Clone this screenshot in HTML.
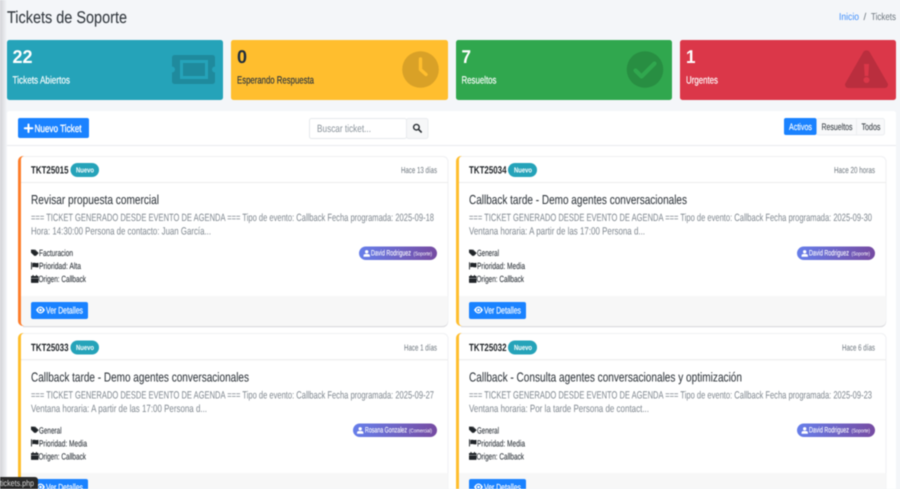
<!DOCTYPE html>
<html lang="es">
<head>
<meta charset="utf-8">
<title>Tickets de Soporte</title>
<style>
html,body{margin:0;padding:0;width:900px;height:489px;overflow:hidden;background:#f4f6f9}
svg{display:block;filter:blur(.42px)}
text{font-family:"Liberation Sans",sans-serif;text-rendering:geometricPrecision}
.m{font-size:9px;fill:#343a40;stroke:#343a40;stroke-width:.12}
.d{font-size:10.5px;fill:#7f878f}
.t{font-size:13px;fill:#343a40;stroke:#343a40;stroke-width:.08}
.k{font-size:10.5px;font-weight:700;fill:#212529}
.b{font-size:7.5px;font-weight:700;fill:#fff}
.h{font-size:8.8px;fill:#6c757d}
.n{font-size:8px;fill:#fff;stroke:#fff;stroke-width:.1}
.r{font-size:5.5px;fill:#fff}
.v{font-size:9.5px;fill:#fff;stroke:#fff;stroke-width:.15}
.sn{font-size:18.5px;font-weight:700;fill:#fff}
.sl{font-size:10.5px;fill:#fff;stroke:#fff;stroke-width:.15}
</style>
</head>
<body>
<svg width="900" height="489" viewBox="0 0 900 489" xmlns="http://www.w3.org/2000/svg">
<defs>
<linearGradient id="pg" x1="0" x2="1" y1="0" y2="0"><stop offset="0" stop-color="#667eea"/><stop offset="1" stop-color="#764ba2"/></linearGradient>
<linearGradient id="sh" x1="0" x2="1" y1="0" y2="0"><stop offset="0" stop-color="#d2d2d6"/><stop offset="1" stop-color="#f4f6f9"/></linearGradient>
<g id="tag"><path d="M0 0.6h3.1l3.5 3.5-3 3L0 3.6z" fill="#212529"/><path d="M4.2 0.6l3.5 3.5-3 3-.7-.7 2.3-2.3-3-3.5z" fill="#212529"/></g>
<path id="flag" d="M0 .3h.9v7.2H0zM1.3 1c2-.9 3.3.6 6.2-.2v4.3c-2.9.8-4.2-.7-6.2.2z" fill="#212529"/>
<path id="cal" d="M1.5 0h1v1h2.5V0h1v1H7a.5.5 0 0 1 .5.5V3H0V1.500A.5.5 0 0 1 .5 1h1zM0 3.400h7.500V7.400a.5.5 0 0 1-.5.5H.5a.5.5 0 0 1-.5-.5z" fill="#212529"/>
<g id="usr"><circle cx="3.200" cy="1.800" r="1.700" fill="#fff"/><path d="M0 6.800V5.600C0 4.500 1 4 2 4h2.400C5.400 4 6.400 4.500 6.400 5.600v1.200z" fill="#fff"/></g>
<g id="eye"><path fill-rule="evenodd" d="M0 3.500C1.400 1.200 2.900 0 4.500 0S7.600 1.200 9 3.500C7.600 5.800 6.100 7 4.500 7S1.400 5.800 0 3.500zM4.500 1.200a2.300 2.300 0 1 0 0 4.600 2.300 2.300 0 0 0 0-4.600z" fill="#fff"/><circle cx="4.500" cy="3.500" r="1.300" fill="#fff"/></g>
</defs>

<rect width="900" height="489" fill="#f4f6f9"/>
<rect width="7" height="489" fill="url(#sh)"/>

<text x="7" y="23" font-size="17" fill="#343a40" stroke="#343a40" stroke-width=".1" textLength="120" lengthAdjust="spacingAndGlyphs">Tickets de Soporte</text>
<text x="839" y="20" font-size="10" fill="#3f8efc" textLength="20" lengthAdjust="spacingAndGlyphs">Inicio</text>
<text x="863.500" y="20" font-size="10" fill="#6c757d">/</text>
<text x="871" y="20" font-size="10" fill="#6c757d" textLength="25" lengthAdjust="spacingAndGlyphs">Tickets</text>

<!-- Stat cards -->
<rect x="7" y="40" width="216" height="60" rx="2.500" fill="#25a3b9"/>
<text class="sn" x="12.500" y="63" textLength="20" lengthAdjust="spacingAndGlyphs">22</text>
<text class="sl" x="12.500" y="83.500" textLength="57.500" lengthAdjust="spacingAndGlyphs">Tickets Abiertos</text>
<path fill-rule="evenodd" fill="#000" fill-opacity=".15" d="M174.500 55h38a2.500 2.500 0 0 1 2.500 2.500v9a3 3 0 0 0 0 6v9a2.500 2.500 0 0 1-2.500 2.500h-38a2.500 2.500 0 0 1-2.500-2.500v-9a3 3 0 0 0 0-6v-9a2.500 2.500 0 0 1 2.500-2.500zM180 60v19h28V60zM183 63h22v13h-22z"/>

<rect x="231" y="40" width="217" height="60" rx="2.500" fill="#ffbe2e"/>
<text class="sn" x="237" y="63" style="fill:#1f2d3d" textLength="10" lengthAdjust="spacingAndGlyphs">0</text>
<text class="sl" x="237" y="83.500" style="fill:#2b3540;stroke:#2b3540" textLength="77" lengthAdjust="spacingAndGlyphs">Esperando Respuesta</text>
<circle cx="420.500" cy="69.500" r="18.300" fill="#000" fill-opacity=".15"/>
<path d="M420.500 59v10.500l5.500 5" fill="none" stroke="#ffbe2e" stroke-width="3.400" stroke-linecap="round" stroke-linejoin="round"/>

<rect x="456" y="40" width="216" height="60" rx="2.500" fill="#30a74e"/>
<text class="sn" x="461.500" y="63" textLength="9.500" lengthAdjust="spacingAndGlyphs">7</text>
<text class="sl" x="461.500" y="83.500" textLength="35" lengthAdjust="spacingAndGlyphs">Resueltos</text>
<circle cx="645" cy="69.500" r="18.300" fill="#000" fill-opacity=".15"/>
<path d="M635.500 70.500l6 6 13-13" fill="none" stroke="#30a74e" stroke-width="4.200" stroke-linecap="round" stroke-linejoin="round"/>

<rect x="680" y="40" width="216" height="60" rx="2.500" fill="#db3749"/>
<text class="sn" x="686" y="63" textLength="9.500" lengthAdjust="spacingAndGlyphs">1</text>
<text class="sl" x="686" y="83.500" textLength="32" lengthAdjust="spacingAndGlyphs">Urgentes</text>
<path d="M863 52.500a4 4 0 0 1 7 0l17.500 30.500a3.300 3.300 0 0 1-3 5h-36a3.300 3.300 0 0 1-3-5z" fill="#000" fill-opacity=".15"/>
<path d="M864 64h5l-.7 12h-3.600z" fill="#db3749"/>
<circle cx="866.500" cy="80" r="3" fill="#db3749"/>

<!-- Main panel -->
<rect x="7" y="111" width="889" height="390" rx="2.500" fill="#fff"/>
<rect x="7" y="145" width="889" height="1" fill="#e9ebee"/>

<rect x="18" y="118" width="71" height="20" rx="2" fill="#1a82ff"/>
<path d="M28.500 124.500v7.500M24.800 128.200h7.500" stroke="#fff" stroke-width="2" stroke-linecap="round"/>
<text x="34.500" y="132" font-size="10.500" fill="#fff" stroke="#fff" stroke-width=".3" textLength="47" lengthAdjust="spacingAndGlyphs">Nuevo Ticket</text>

<rect x="309.500" y="118.500" width="97" height="20" rx="2" fill="#fff" stroke="#e6e9ec"/>
<text x="317" y="132" font-size="10.500" fill="#8a939b" textLength="54" lengthAdjust="spacingAndGlyphs">Buscar ticket...</text>
<rect x="406.500" y="118.500" width="21.500" height="20" rx="2" fill="#f6f7f8" stroke="#e9ebee"/>
<circle cx="416.400" cy="127.200" r="2.800" fill="none" stroke="#2b3035" stroke-width="1.400"/>
<path d="M418.500 129.300l2.700 2.700" stroke="#2b3035" stroke-width="1.600" stroke-linecap="round"/>

<rect x="816.500" y="118.500" width="68" height="16.500" rx="2" fill="#f8f9fa" stroke="#eceef0"/>
<path d="M856.500 118.500v16.500" stroke="#eceef0"/>
<rect x="784" y="118" width="32.500" height="17" rx="2" fill="#1a82ff"/>
<text x="789" y="130" font-size="9.500" fill="#fff" stroke="#fff" stroke-width=".12" textLength="23" lengthAdjust="spacingAndGlyphs">Activos</text>
<text x="821.500" y="130" font-size="9.500" fill="#3e444a" stroke="#3e444a" stroke-width=".1" textLength="31" lengthAdjust="spacingAndGlyphs">Resueltos</text>
<text x="861.500" y="130" font-size="9.500" fill="#3e444a" stroke="#3e444a" stroke-width=".1" textLength="19" lengthAdjust="spacingAndGlyphs">Todos</text>

<!-- Ticket 1 -->
<g>
<rect x="18.500" y="156.500" width="429.500" height="169.500" rx="5" fill="#fff" stroke="#eff0f2"/>
<path d="M20 296h428v25a5 5 0 0 1-5 5H23a5 5 0 0 1-3-1z" fill="#f7f7f7"/>
<path d="M23 326h420a5 5 0 0 0 5-5v1a5 5 0 0 1-5 5.200H23z" fill="#dcdcdf"/>
<path d="M23 156a5 5 0 0 0-5 5v160a5 5 0 0 0 5 5h1a4 4 0 0 1-3-4V160a4 4 0 0 1 3-4z" fill="#fd7e2c"/>
<rect x="21" y="182" width="427" height="1" fill="#ececec"/>
<text class="k" x="31" y="173.500" textLength="37.500" lengthAdjust="spacingAndGlyphs">TKT25015</text>
<rect x="70.500" y="163" width="28.500" height="14" rx="7" fill="#25a3b9"/>
<text class="b" x="76" y="172.700" textLength="18" lengthAdjust="spacingAndGlyphs">Nuevo</text>
<text class="h" x="401" y="173" textLength="36" lengthAdjust="spacingAndGlyphs">Hace 13 días</text>
<text class="t" x="31" y="204" textLength="128" lengthAdjust="spacingAndGlyphs">Revisar propuesta comercial</text>
<text class="d" x="31" y="221" textLength="403" lengthAdjust="spacingAndGlyphs">=== TICKET GENERADO DESDE EVENTO DE AGENDA === Tipo de evento: Callback Fecha programada: 2025-09-18</text>
<text class="d" x="31" y="234.500" textLength="180" lengthAdjust="spacingAndGlyphs">Hora: 14:30:00 Persona de contacto: Juan García...</text>
<use href="#tag" x="31" y="249"/><text class="m" x="39" y="256" textLength="34" lengthAdjust="spacingAndGlyphs">Facturacion</text>
<use href="#flag" x="31" y="262"/><text class="m" x="39" y="269" textLength="42" lengthAdjust="spacingAndGlyphs">Prioridad: Alta</text>
<use href="#cal" x="31" y="275"/><text class="m" x="38.500" y="282" textLength="47.500" lengthAdjust="spacingAndGlyphs">Origen: Callback</text>
<rect x="359" y="246.500" width="78" height="13.500" rx="6.750" fill="url(#pg)"/>
<use href="#usr" x="363.500" y="250"/>
<text class="n" x="371" y="255.500" textLength="40" lengthAdjust="spacingAndGlyphs">David Rodriguez</text>
<text class="r" x="413.500" y="255.500" textLength="18.500" lengthAdjust="spacingAndGlyphs">(Soporte)</text>
<rect x="31" y="302" width="57" height="17" rx="2" fill="#1a82ff"/>
<use href="#eye" x="36" y="306.500"/>
<text class="v" x="46" y="313.500" textLength="37" lengthAdjust="spacingAndGlyphs">Ver Detalles</text>
</g>

<!-- Ticket 2 -->
<g>
<rect x="456.500" y="156.500" width="429.500" height="169.500" rx="5" fill="#fff" stroke="#eff0f2"/>
<path d="M458 296h428v25a5 5 0 0 1-5 5H461a5 5 0 0 1-3-1z" fill="#f7f7f7"/>
<path d="M461 326h420a5 5 0 0 0 5-5v1a5 5 0 0 1-5 5.200H461z" fill="#dcdcdf"/>
<path d="M461 156a5 5 0 0 0-5 5v160a5 5 0 0 0 5 5h1a4 4 0 0 1-3-4V160a4 4 0 0 1 3-4z" fill="#ffbe2e"/>
<rect x="459" y="182" width="427" height="1" fill="#ececec"/>
<text class="k" x="469" y="173.500" textLength="37.500" lengthAdjust="spacingAndGlyphs">TKT25034</text>
<rect x="508" y="163" width="29" height="14" rx="7" fill="#25a3b9"/>
<text class="b" x="514" y="172.700" textLength="18" lengthAdjust="spacingAndGlyphs">Nuevo</text>
<text class="h" x="834" y="173" textLength="41" lengthAdjust="spacingAndGlyphs">Hace 20 horas</text>
<text class="t" x="469" y="204" textLength="218" lengthAdjust="spacingAndGlyphs">Callback tarde - Demo agentes conversacionales</text>
<text class="d" x="469" y="221" textLength="403" lengthAdjust="spacingAndGlyphs">=== TICKET GENERADO DESDE EVENTO DE AGENDA === Tipo de evento: Callback Fecha programada: 2025-09-30</text>
<text class="d" x="469" y="234.500" textLength="176" lengthAdjust="spacingAndGlyphs">Ventana horaria: A partir de las 17:00 Persona d...</text>
<use href="#tag" x="469" y="249"/><text class="m" x="477" y="256" textLength="22" lengthAdjust="spacingAndGlyphs">General</text>
<use href="#flag" x="469" y="262"/><text class="m" x="477" y="269" textLength="48" lengthAdjust="spacingAndGlyphs">Prioridad: Media</text>
<use href="#cal" x="469" y="275"/><text class="m" x="476.500" y="282" textLength="47.500" lengthAdjust="spacingAndGlyphs">Origen: Callback</text>
<rect x="797" y="246.500" width="78" height="13.500" rx="6.750" fill="url(#pg)"/>
<use href="#usr" x="801.500" y="250"/>
<text class="n" x="809" y="255.500" textLength="40" lengthAdjust="spacingAndGlyphs">David Rodriguez</text>
<text class="r" x="851.500" y="255.500" textLength="18.500" lengthAdjust="spacingAndGlyphs">(Soporte)</text>
<rect x="469" y="302" width="57" height="17" rx="2" fill="#1a82ff"/>
<use href="#eye" x="474" y="306.500"/>
<text class="v" x="484" y="313.500" textLength="37" lengthAdjust="spacingAndGlyphs">Ver Detalles</text>
</g>

<!-- Ticket 3 -->
<g>
<rect x="18.500" y="333.500" width="429.500" height="170" rx="5" fill="#fff" stroke="#f0f1f3"/>
<rect x="20" y="473" width="428" height="30" fill="#f7f7f7"/>
<path d="M23 333a5 5 0 0 0-5 5v160h3V337a4 4 0 0 1 3-4z" fill="#ffbe2e"/>
<rect x="21" y="359" width="427" height="1.500" fill="#f0f0f0"/>
<text class="k" x="31" y="351" textLength="37.500" lengthAdjust="spacingAndGlyphs">TKT25033</text>
<rect x="70.500" y="340.500" width="28.500" height="14" rx="7" fill="#25a3b9"/>
<text class="b" x="76" y="350" textLength="18" lengthAdjust="spacingAndGlyphs">Nuevo</text>
<text class="h" x="404" y="350.500" textLength="33" lengthAdjust="spacingAndGlyphs">Hace 1 días</text>
<text class="t" x="31" y="381.500" textLength="218" lengthAdjust="spacingAndGlyphs">Callback tarde - Demo agentes conversacionales</text>
<text class="d" x="31" y="398.500" textLength="403" lengthAdjust="spacingAndGlyphs">=== TICKET GENERADO DESDE EVENTO DE AGENDA === Tipo de evento: Callback Fecha programada: 2025-09-27</text>
<text class="d" x="31" y="412" textLength="176" lengthAdjust="spacingAndGlyphs">Ventana horaria: A partir de las 17:00 Persona d...</text>
<use href="#tag" x="31" y="426"/><text class="m" x="39" y="433.500" textLength="22.500" lengthAdjust="spacingAndGlyphs">General</text>
<use href="#flag" x="31" y="439"/><text class="m" x="39" y="446.500" textLength="48" lengthAdjust="spacingAndGlyphs">Prioridad: Media</text>
<use href="#cal" x="31" y="452"/><text class="m" x="38.500" y="459.500" textLength="47.500" lengthAdjust="spacingAndGlyphs">Origen: Callback</text>
<rect x="353" y="423.500" width="84" height="13.500" rx="6.750" fill="url(#pg)"/>
<use href="#usr" x="357" y="427"/>
<text class="n" x="365" y="432.700" textLength="42" lengthAdjust="spacingAndGlyphs">Rosana Gonzalez</text>
<text class="r" x="409" y="432.700" textLength="23" lengthAdjust="spacingAndGlyphs">(Comercial)</text>
<rect x="31" y="479" width="57" height="17" rx="2" fill="#1a82ff"/>
<use href="#eye" x="36" y="483.500"/>
<text class="v" x="46" y="490.500" textLength="37" lengthAdjust="spacingAndGlyphs">Ver Detalles</text>
</g>

<!-- Ticket 4 -->
<g>
<rect x="456.500" y="333.500" width="429.500" height="170" rx="5" fill="#fff" stroke="#f0f1f3"/>
<rect x="458" y="473" width="428" height="30" fill="#f7f7f7"/>
<path d="M461 333a5 5 0 0 0-5 5v160h3V337a4 4 0 0 1 3-4z" fill="#ffbe2e"/>
<rect x="459" y="359" width="427" height="1.500" fill="#f0f0f0"/>
<text class="k" x="469" y="351" textLength="37.500" lengthAdjust="spacingAndGlyphs">TKT25032</text>
<rect x="508" y="340.500" width="29" height="14" rx="7" fill="#25a3b9"/>
<text class="b" x="514" y="350" textLength="18" lengthAdjust="spacingAndGlyphs">Nuevo</text>
<text class="h" x="842" y="350.500" textLength="33" lengthAdjust="spacingAndGlyphs">Hace 6 días</text>
<text class="t" x="469" y="381.500" textLength="273" lengthAdjust="spacingAndGlyphs">Callback - Consulta agentes conversacionales y optimización</text>
<text class="d" x="469" y="398.500" textLength="403" lengthAdjust="spacingAndGlyphs">=== TICKET GENERADO DESDE EVENTO DE AGENDA === Tipo de evento: Callback Fecha programada: 2025-09-23</text>
<text class="d" x="469" y="412" textLength="180" lengthAdjust="spacingAndGlyphs">Ventana horaria: Por la tarde Persona de contact...</text>
<use href="#tag" x="469" y="426"/><text class="m" x="477" y="433.500" textLength="22" lengthAdjust="spacingAndGlyphs">General</text>
<use href="#flag" x="469" y="439"/><text class="m" x="477" y="446.500" textLength="48" lengthAdjust="spacingAndGlyphs">Prioridad: Media</text>
<use href="#cal" x="469" y="452"/><text class="m" x="476.500" y="459.500" textLength="47.500" lengthAdjust="spacingAndGlyphs">Origen: Callback</text>
<rect x="797" y="423.500" width="78" height="13.500" rx="6.750" fill="url(#pg)"/>
<use href="#usr" x="801.500" y="427"/>
<text class="n" x="809" y="432.700" textLength="40" lengthAdjust="spacingAndGlyphs">David Rodriguez</text>
<text class="r" x="851.500" y="432.700" textLength="18.500" lengthAdjust="spacingAndGlyphs">(Soporte)</text>
<rect x="469" y="479" width="57" height="17" rx="2" fill="#1a82ff"/>
<use href="#eye" x="474" y="483.500"/>
<text class="v" x="484" y="490.500" textLength="37" lengthAdjust="spacingAndGlyphs">Ver Detalles</text>
</g>

<!-- Status bar tooltip -->
<path d="M0 477h35a3 3 0 0 1 3 3v9H0z" fill="#2a2a2a"/>
<text x="0" y="486" font-size="8.500" fill="#d8d8d8" textLength="34" lengthAdjust="spacingAndGlyphs">tickets.php</text>
</svg>
</body>
</html>
